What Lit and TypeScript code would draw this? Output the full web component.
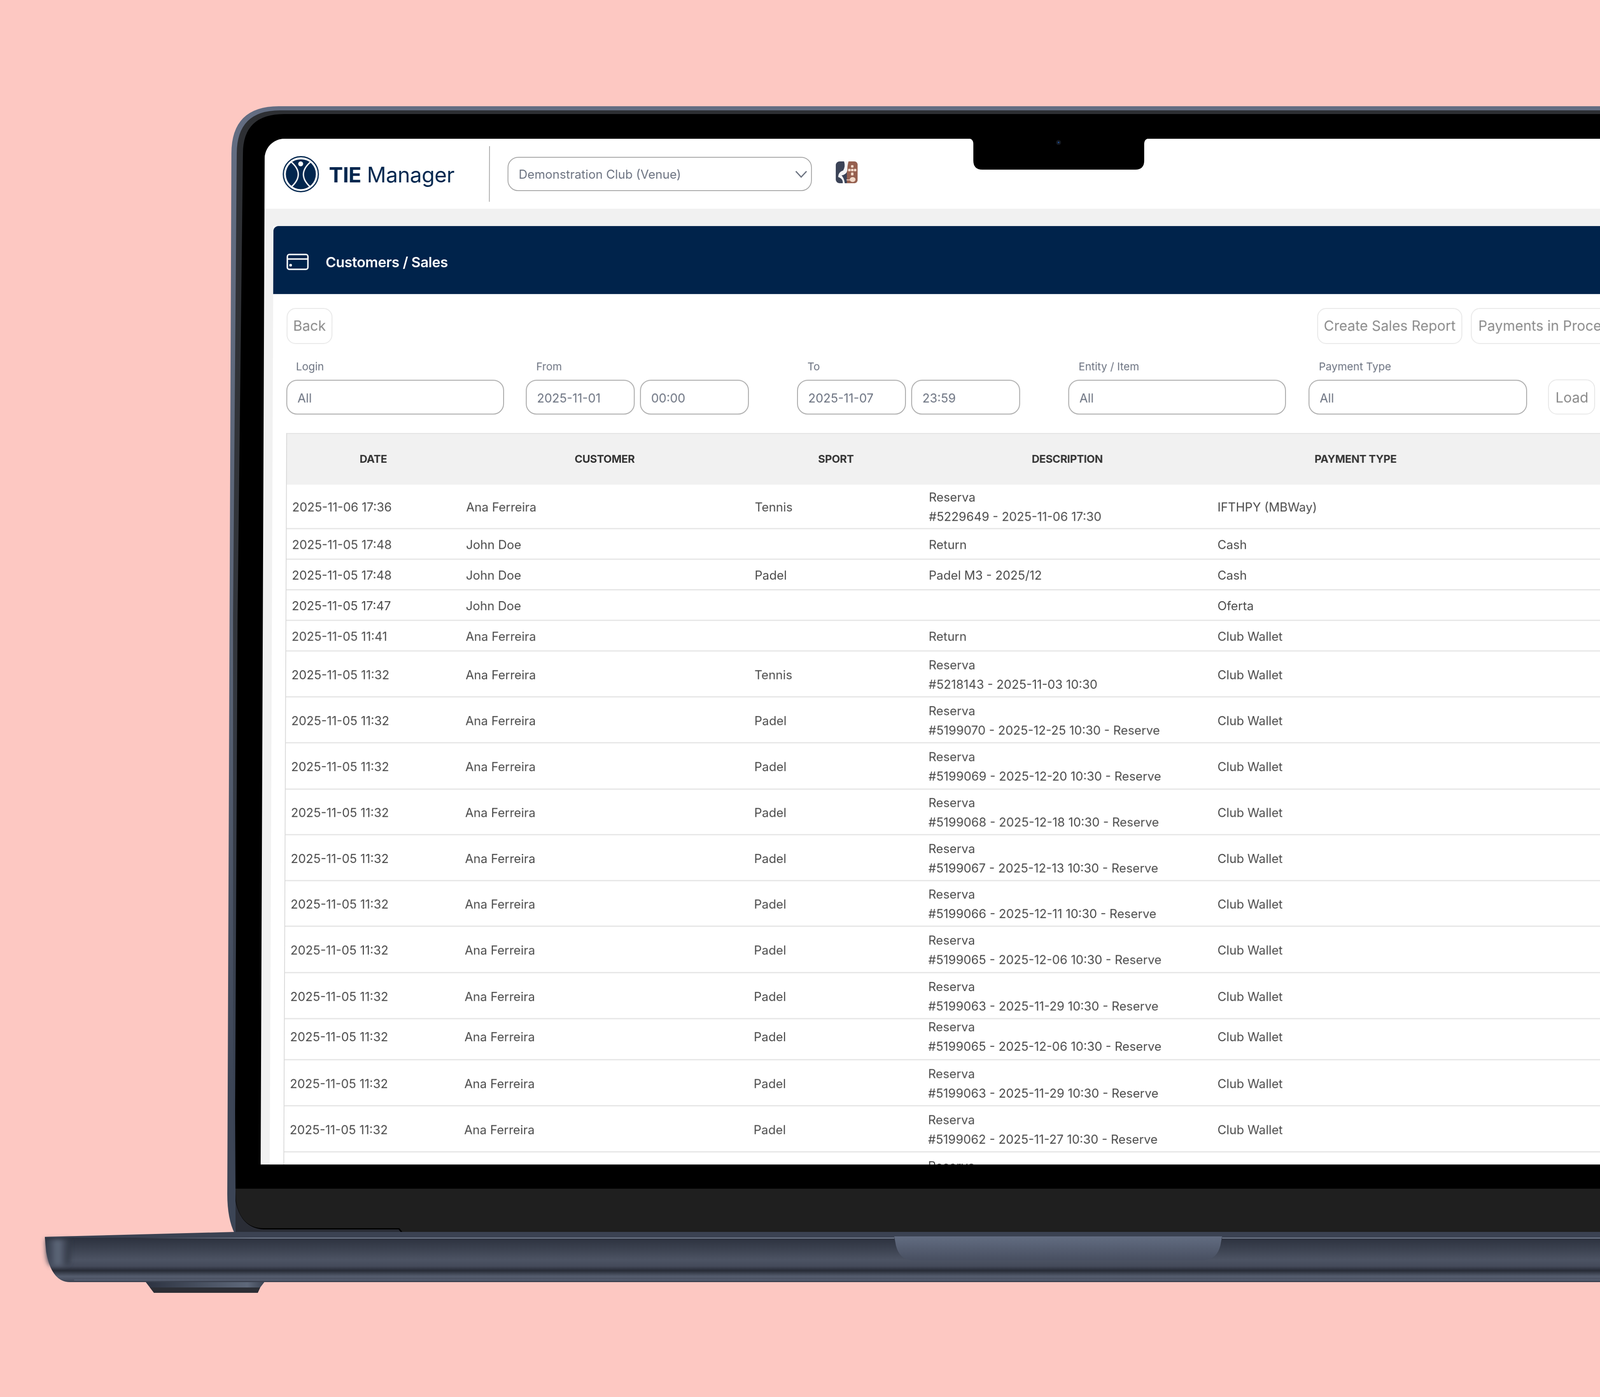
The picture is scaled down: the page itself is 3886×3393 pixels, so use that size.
import { LitElement, html, css, svg } from "lit";
import { customElement } from "lit/decorators.js";

type Row = { d: string; c: string; s: string; t: string[]; p: string; h: number; seam?: boolean };
const club = "Club Wallet";
const ana = "Ana Ferreira";
const john = "John Doe";
const at = "2025-11-05 11:32";
const res = (code: string) => ["Reserva", code];
const rows: Row[] = [
  { d: "2025-11-06 17:36", c: ana, s: "Tennis", t: res("#5229649 - 2025-11-06 17:30"), p: "IFTHPY (MBWay)", h: 108 },
  { d: "2025-11-05 17:48", c: john, s: "", t: ["Return"], p: "Cash", h: 74 },
  { d: "2025-11-05 17:48", c: john, s: "Padel", t: ["Padel M3 - 2025/12"], p: "Cash", h: 74 },
  { d: "2025-11-05 17:47", c: john, s: "", t: [], p: "Oferta", h: 74 },
  { d: "2025-11-05 11:41", c: ana, s: "", t: ["Return"], p: club, h: 74 },
  { d: at, c: ana, s: "Tennis", t: res("#5218143 - 2025-11-03 10:30"), p: club, h: 111 },
  { d: at, c: ana, s: "Padel", t: res("#5199070 - 2025-12-25 10:30 - Reserve"), p: club, h: 111 },
  { d: at, c: ana, s: "Padel", t: res("#5199069 - 2025-12-20 10:30 - Reserve"), p: club, h: 112 },
  { d: at, c: ana, s: "Padel", t: res("#5199068 - 2025-12-18 10:30 - Reserve"), p: club, h: 110 },
  { d: at, c: ana, s: "Padel", t: res("#5199067 - 2025-12-13 10:30 - Reserve"), p: club, h: 111 },
  { d: at, c: ana, s: "Padel", t: res("#5199066 - 2025-12-11 10:30 - Reserve"), p: club, h: 110 },
  { d: at, c: ana, s: "Padel", t: res("#5199065 - 2025-12-06 10:30 - Reserve"), p: club, h: 112 },
  { d: at, c: ana, s: "Padel", t: res("#5199063 - 2025-11-29 10:30 - Reserve"), p: club, h: 111 },
  { d: at, c: ana, s: "Padel", t: res("#5199065 - 2025-12-06 10:30 - Reserve"), p: club, h: 99, seam: true },
  { d: at, c: ana, s: "Padel", t: res("#5199063 - 2025-11-29 10:30 - Reserve"), p: club, h: 111 },
  { d: at, c: ana, s: "Padel", t: res("#5199062 - 2025-11-27 10:30 - Reserve"), p: club, h: 111 },
  { d: "", c: "", s: "", t: ["Reserva", ""], p: "", h: 112 },
];

const chassis = svg`
  <defs>
    <linearGradient id="front" x1="0" y1="0" x2="0" y2="1">
      <stop offset="0" stop-color="#2c313e"/><stop offset=".2" stop-color="#383e4c"/>
      <stop offset=".5" stop-color="#4c5363"/><stop offset=".64" stop-color="#444a5a"/>
      <stop offset=".74" stop-color="#272b36"/><stop offset=".87" stop-color="#555d6e"/>
      <stop offset=".94" stop-color="#4a5162"/><stop offset="1" stop-color="#3a404e"/>
    </linearGradient>
    <linearGradient id="cap" x1="0" y1="0" x2="1" y2="0">
      <stop offset="0" stop-color="#2f3645"/><stop offset=".5" stop-color="#606a7c"/>
      <stop offset="1" stop-color="#2c313e"/>
    </linearGradient>
    <linearGradient id="dip" x1="0" y1="0" x2="0" y2="1">
      <stop offset="0" stop-color="#626c81"/><stop offset="1" stop-color="#484f61"/>
    </linearGradient>
    <linearGradient id="foot" x1="0" y1="0" x2="1" y2="0">
      <stop offset="0" stop-color="#2c3240"/><stop offset=".85" stop-color="#5e687a"/>
      <stop offset="1" stop-color="#3a4150"/>
    </linearGradient>
    <linearGradient id="metal" gradientUnits="userSpaceOnUse" x1="0" y1="258" x2="0" y2="2900">
      <stop offset="0" stop-color="#636d82"/><stop offset=".5" stop-color="#5a6476"/>
      <stop offset=".9" stop-color="#3c4556"/>
    </linearGradient>
    <linearGradient id="rim" gradientUnits="userSpaceOnUse" x1="0" y1="258" x2="0" y2="2900">
      <stop offset="0" stop-color="#2d2f33"/><stop offset=".5" stop-color="#33363c"/>
      <stop offset=".9" stop-color="#3a4354"/>
    </linearGradient>
    <linearGradient id="shine" gradientUnits="userSpaceOnUse" x1="330" y1="0" x2="620" y2="0">
      <stop offset="0" stop-color="#8d98aa" stop-opacity="0"/><stop offset="1" stop-color="#8d98aa"/>
    </linearGradient>
    <filter id="soft" x="-40%" y="-40%" width="180%" height="180%"><feGaussianBlur stdDeviation="6"/></filter>
  </defs>
  <path d="M351 3110H645L632 3127L626 3140H374L364 3127Z" fill="url(#foot)"/>
  <path d="M364 3127H632L626 3140H374Z" fill="#2c2e35"/>
  <path d="M3886 258H677Q562 258 562 373L552 2900Q552 2960 570 2996H3886Z" fill="url(#metal)"/>
  <path d="M3886 268H680Q575 268 575 373L566 1500L566 2700Q566 2900 585 2996H3886Z" fill="url(#rim)"/>
  <path d="M3886 277H690Q590 277 590 373L577 1500L571 2700L572 2887V3000H3886Z" fill="#000"/>
  <path d="M572 2887H3886V2993H978L970 2983H640Q585 2983 573 2917Z" fill="#1f1f1f"/>
  <path d="M572 2887V2917Q585 2983 640 2986H968L976 2996H572Z" fill="#2a2d36"/>
  <path d="M109 3004L572 2992H3886V3008H109Z" fill="#3b4252"/>
  <path d="M109 3006H3886V3114H170Q125 3114 112 3040Z" fill="url(#front)"/>
  <path d="M111 3010H170V3062Q170 3074 155 3074H125Q114 3074 112 3040Z" fill="url(#cap)" filter="url(#soft)"/>
  <path d="M330 3007H2172M2968 3007H3886" stroke="url(#shine)" stroke-width="2" opacity=".85"/>
  <path d="M180 3109H3886" stroke="#687286" stroke-width="2" opacity=".6"/>
  <path d="M2172 3003H2968L2964 3025Q2955 3061 2920 3061H2218Q2185 3061 2176 3025Z" fill="url(#dip)"/>
`;

const overlay = svg`
  <path d="M2350 336Q2364 336 2364 350V390Q2364 412 2386 412H2757Q2779 412 2779 390V350Q2779 336 2793 336Z" fill="#000"/>
  <circle cx="2571" cy="346" r="6" fill="#14181f"/>
  <circle cx="2571" cy="346" r="2" fill="#1d4a8c"/>
`;

@customElement("app-root")
export class AppRoot extends LitElement {
  static styles = css`
    :host { display: block; }
    .stage { position: relative; width: 3886px; height: 3393px; overflow: hidden; background: #fdc8c2; font-family: Inter, "Liberation Sans", sans-serif; }
    .layer { position: absolute; left: 0; top: 0; width: 3886px; height: 3393px; pointer-events: none; }
    .screen {
      position: absolute; left: 643px; top: 337px; width: 3500px; height: 2481px;
      overflow: hidden; background: #f1f1f1; border-radius: 48px 0 0 0;
      transform-origin: 2313px 0; transform: perspective(10000px) rotateX(0.99deg);
      filter: blur(0.55px);
    }
    .topbar { height: 170px; background: #fff; display: flex; align-items: center; padding-left: 44px; box-sizing: border-box; }
    .logo { width: 88px; height: 88px; flex: none; margin-top: 2px; }
    .brand { margin-left: 24px; padding-top: 4px; width: 389px; font-size: 51.5px; letter-spacing: -0.5px; color: #02264e; white-space: nowrap; }
    .brand b { font-weight: 700; }
    .divider { width: 2px; height: 135px; background: #aaa; flex: none; }
    .venue { margin-left: 43px; width: 739px; height: 83px; box-sizing: border-box; border: 2px solid #a3a3a3; border-radius: 26px; display: flex; align-items: center; justify-content: space-between; padding: 2px 9px 0 25px; font-size: 29.5px; color: #6b7280; }
    .chev { width: 30px; height: 18px; }
    .sport-logo { margin-left: 58px; width: 53px; height: 53px; margin-top: -8px; }
    .panel { margin: 42px 0 0 22px; background: #fff; height: 2300px; }
    .phead { height: 165px; background: #00234b; border-radius: 12px 0 0 0; display: flex; align-items: center; padding: 9px 0 0 32px; box-sizing: border-box; color: #fff; font-weight: 600; font-size: 34.5px; letter-spacing: -0.4px; }
    .phead svg { width: 54px; height: 40px; margin-right: 41px; flex: none; }
    .body { padding: 34px 0 0 33px; }
    .btn { box-sizing: border-box; height: 87px; border: 2px solid #e6e6e6; border-radius: 22px; display: flex; align-items: center; justify-content: center; padding-bottom: 2px; color: #8a8a8a; font-size: 34px; white-space: nowrap; background: #fff; flex: none; }
    .actions { display: flex; align-items: center; width: 3400px; }
    .back { width: 111px; }
    .spacer { width: 2390px; flex: none; }
    .report { width: 352px; }
    .process { width: 460px; margin-left: 21px; justify-content: flex-start; padding-left: 16px; }
    .filters { display: flex; align-items: flex-end; margin-top: 33px; height: 138px; }
    .field { flex: none; }
    .field label { display: block; font-size: 26px; color: #6b7280; margin: 0 0 16px 25px; line-height: 32px; }
    .field.first label { margin-left: 23px; }
    .pair { display: flex; gap: 13px; }
    .input { box-sizing: border-box; height: 84px; border: 2.5px solid #a3a3a3; border-radius: 26px; display: flex; align-items: center; padding: 4px 0 0 25px; font-size: 29.5px; color: #6b7280; }
    .w528 { width: 528px; }
    .w530 { width: 530px; }
    .w264 { width: 264px; }
    .g53 { margin-left: 53px; }
    .g117 { margin-left: 117px; }
    .g55 { margin-left: 55px; }
    .btn.load { width: 114px; height: 85px; margin-left: 51px; padding: 2px 0 0 2px; }
    .table { margin-top: 45px; width: 3300px; border-left: 2px solid #d9d9d9; box-sizing: border-box; }
    .tr { display: grid; grid-template-columns: 422px 700px 422px 700px 699px 1fr; align-items: center; box-sizing: border-box; border-bottom: 3px solid #e6e6e6; font-size: 29.5px; color: #4a4a4a; }
    .th { height: 125px; background: #f1f1f1; border-top: 2px solid #e2e2e2; border-bottom: 0; font-size: 26px; font-weight: 700; color: #333; text-align: center; letter-spacing: -0.4px; padding-bottom: 2px; }
    .th div { padding-right: 3px; }
    .td { padding: 3px 0 0 13px; white-space: nowrap; }
    .seam .td { margin-top: -15px; }
    .line { line-height: 47px; min-height: 47px; }
  `;

  render() {
    return html`
      <div class="stage">
        <svg class="layer" viewBox="0 0 3886 3393">${chassis}</svg>
        <div class="screen">
          <div class="topbar">
            <svg class="logo" viewBox="0 0 88 88">
              <circle cx="44" cy="44" r="42.5" fill="#fff" stroke="#02264e" stroke-width="3"/>
              <circle cx="44" cy="44" r="36.5" fill="#02264e"/>
              <path d="M19 13Q56 44 20 76M69 13Q32 44 68 76" fill="none" stroke="#fff" stroke-width="3.2"/>
              <path d="M20 13Q44 0 68 13" fill="none" stroke="#fff" stroke-width="3"/>
              <circle cx="43.500" cy="19" r="6" fill="#fff"/>
            </svg>
            <div class="brand"><b>TIE</b> Manager</div>
            <div class="divider"></div>
            <div class="venue">
              <span>Demonstration Club (Venue)</span>
              <svg class="chev" viewBox="0 0 30 18"><path d="M2 2L15 16L28 2" fill="none" stroke="#6b7280" stroke-width="3"/></svg>
            </div>
            <svg class="sport-logo" viewBox="0 0 53 53">
              <rect width="53" height="53" rx="9" fill="#3b4357"/>
              <path d="M27 0H44Q53 0 53 9V44Q53 53 44 53H27Z" fill="#96604f"/>
              <path d="M20 0H31Q28 10 28 22Q26 32 14 34Q20 40 22 53H17Q18 42 6 38Q6 26 18 22Q24 12 20 0Z" fill="#f4f4f5"/>
              <g fill="#f1d9c9">
                <rect x="37" y="9" width="6" height="6" rx="1.500"/>
                <rect x="30" y="18" width="6" height="6" rx="1.500"/>
                <rect x="37" y="18" width="6" height="6" rx="1.500"/>
                <rect x="44" y="18" width="6" height="6" rx="1.500"/>
                <rect x="37" y="27" width="6" height="7" rx="1.500"/>
                <ellipse cx="41" cy="44" rx="7" ry="6"/>
              </g>
              <path d="M26 45H35" stroke="#f1d9c9" stroke-width="2"/>
            </svg>
          </div>
          <div class="panel">
            <div class="phead">
              <svg viewBox="0 0 54 40" fill="none" stroke="#fff" stroke-width="3.500">
                <rect x="2" y="2" width="50" height="36" rx="5"/>
                <path d="M2 13H52"/>
                <circle cx="10" cy="28" r="1.500" fill="#fff"/>
              </svg>
              Customers / Sales
            </div>
            <div class="body">
              <div class="actions">
                <div class="btn back">Back</div>
                <div class="spacer"></div>
                <div class="btn report">Create Sales Report</div>
                <div class="btn process">Payments in Process</div>
              </div>
              <div class="filters">
                <div class="field first"><label>Login</label><div class="input w528">All</div></div>
                <div class="field g53"><label>From</label><div class="pair"><div class="input w264">2025-11-01</div><div class="input w264">00:00</div></div></div>
                <div class="field g117"><label>To</label><div class="pair"><div class="input w264">2025-11-07</div><div class="input w264">23:59</div></div></div>
                <div class="field g117"><label>Entity / Item</label><div class="input w528">All</div></div>
                <div class="field g55"><label>Payment Type</label><div class="input w530">All</div></div>
                <div class="btn load">Load</div>
              </div>
              <div class="table">
                <div class="tr th"><div>DATE</div><div>CUSTOMER</div><div>SPORT</div><div>DESCRIPTION</div><div>PAYMENT TYPE</div><div></div></div>
                ${rows.map(
                  (r) => html`<div class="tr ${r.seam ? "seam" : ""}" style="height:${r.h}px">
                    <div class="td">${r.d}</div>
                    <div class="td">${r.c}</div>
                    <div class="td">${r.s}</div>
                    <div class="td">${r.t.map((l) => html`<div class="line">${l}</div>`)}</div>
                    <div class="td">${r.p}</div>
                    <div></div>
                  </div>`
                )}
              </div>
            </div>
          </div>
        </div>
        <svg class="layer" viewBox="0 0 3886 3393">${overlay}</svg>
      </div>
    `;
  }
}
